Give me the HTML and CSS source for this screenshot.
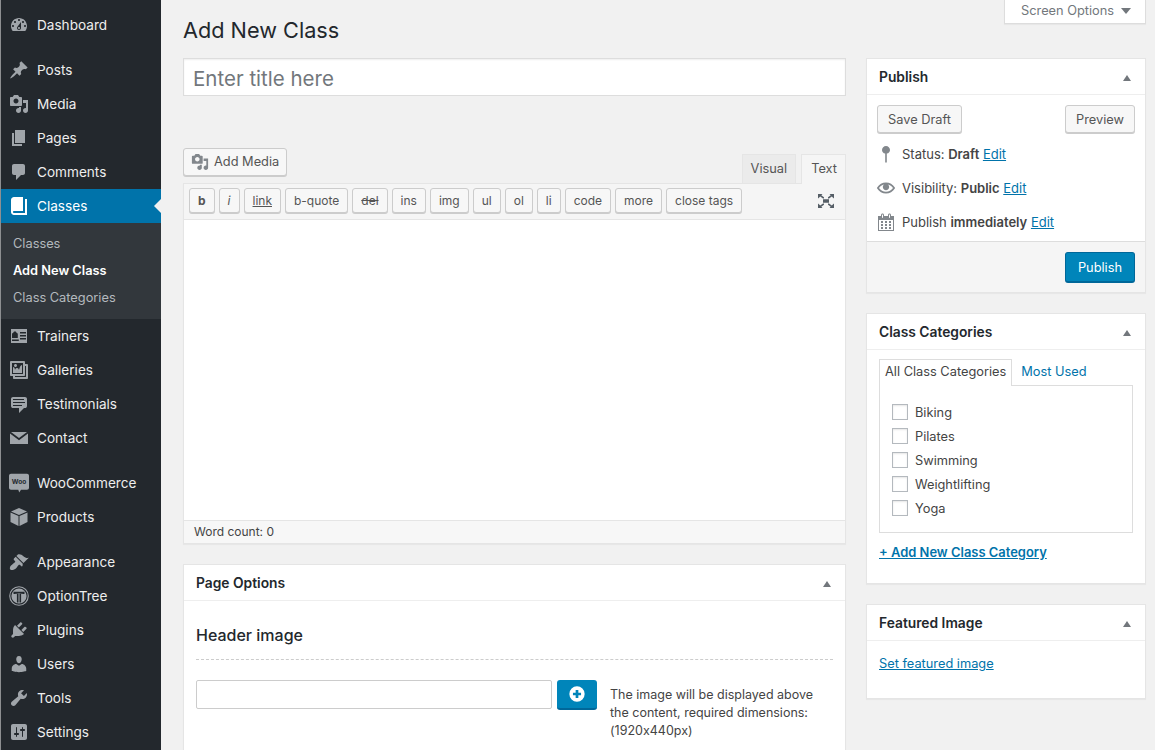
FILE: index.html
```html
<!DOCTYPE html>
<html lang="en">
<head>
<meta charset="utf-8">
<title>Add New Class</title>
<link rel="stylesheet" href="styles.css">
</head>
<body>
<svg class="defs" width="0" height="0" aria-hidden="true">
  <symbol id="i-media" viewBox="0 0 20 20"><path d="M13 11V4c0-.55-.45-1-1-1h-1.67L9 1H5L3.67 3H2c-.55 0-1 .45-1 1v7c0 .55.45 1 1 1h10c.55 0 1-.45 1-1zM7 4.5c1.38 0 2.5 1.12 2.5 2.5S8.38 9.5 7 9.5 4.5 8.38 4.5 7 5.62 4.5 7 4.5zM14 6h5v10.5c0 1.38-1.12 2.5-2.5 2.5S14 17.88 14 16.5s1.12-2.5 2.5-2.5c.17 0 .34.02.5.05V9h-3V6zm-4 8.05V13h2v3.5c0 1.38-1.12 2.5-2.5 2.5S7 17.88 7 16.5 8.12 14 9.5 14c.17 0 .34.02.5.05z"/></symbol>
</svg>
<div class="layout">
<nav class="sidebar">
  <ul class="menu">
    <li class="item"><svg class="ico" viewBox="0 0 20 20"><path d="M3.76 16h12.48c1.1-1.37 1.76-3.11 1.76-5 0-4.42-3.58-8-8-8s-8 3.58-8 8c0 1.89.66 3.63 1.76 5zM10 4c.55 0 1 .45 1 1s-.45 1-1 1-1-.45-1-1 .45-1 1-1zM6 6c.55 0 1 .45 1 1s-.45 1-1 1-1-.45-1-1 .45-1 1-1zm8 0c.55 0 1 .45 1 1s-.45 1-1 1-1-.45-1-1 .45-1 1-1zm-5.37 5.55L12 7v6c0 1.1-.9 2-2 2s-2-.9-2-2c0-.57.24-1.08.63-1.45zM4 10c.55 0 1 .45 1 1s-.45 1-1 1-1-.45-1-1 .45-1 1-1zm12 0c.55 0 1 .45 1 1s-.45 1-1 1-1-.45-1-1 .45-1 1-1zm-5 3c0-.55-.45-1-1-1s-1 .45-1 1 .45 1 1 1 1-.45 1-1z" fill-rule="evenodd"/></svg>Dashboard</li>
    <li class="sep"></li>
    <li class="item"><svg class="ico" viewBox="0 0 20 20"><path d="M10.44 3.02l1.82-1.82 6.36 6.35-1.83 1.82c-1.05-.68-2.48-.57-3.41.36l-.75.75c-.92.93-1.04 2.35-.35 3.41l-1.83 1.82-2.41-2.41-2.8 2.79c-.42.42-3.38 2.71-3.8 2.29s1.86-3.39 2.28-3.81l2.79-2.79L4.1 9.36l1.83-1.82c1.05.69 2.48.57 3.4-.36l.75-.75c.93-.92 1.05-2.35.36-3.41z"/></svg>Posts</li>
    <li class="item"><svg class="ico"><use href="#i-media"/></svg>Media</li>
    <li class="item"><svg class="ico" viewBox="0 0 20 20"><path d="M6 15V2h10v13H6zm-1 1h8v2H3V5h2v11z"/></svg>Pages</li>
    <li class="item"><svg class="ico" viewBox="0 0 20 20"><path d="M5 2h9c1.1 0 2 .9 2 2v7c0 1.1-.9 2-2 2h-2l-5 5v-5H5c-1.1 0-2-.9-2-2V4c0-1.1.9-2 2-2z"/></svg>Comments</li>
    <li class="item current"><svg class="ico" viewBox="0 0 20 20"><path d="M16 3h2v16H5c-1.66 0-3-1.34-3-3V4c0-1.66 1.34-3 3-3h9v14H5c-.55 0-1 .45-1 1s.45 1 1 1h11V3z"/></svg>Classes</li>
    <li class="sub">
      <a class="sub-link">Classes</a>
      <a class="sub-link on">Add New Class</a>
      <a class="sub-link">Class Categories</a>
    </li>
    <li class="item"><svg class="ico" viewBox="0 0 20 20"><path fill-rule="evenodd" d="M2 3h16v14H2zM3 8.2c0-1 .7-1.2 1.2-1.2 0-.9.5-1.6 1.7-1.6s1.7.7 1.7 1.6c.5 0 1.2.2 1.2 1.200V12H3zM11 6h6v1.500h-6zM11 9h6v1.500h-6zM11 12h6v1.500h-6zM3 13.500h6.800V15H3z"/></svg>Trainers</li>
    <li class="item"><svg class="ico" viewBox="0 0 20 20"><path d="M16 4h1.960c.57 0 1.040.47 1.040 1.040v12.920c0 .57-.47 1.040-1.040 1.040H5.040C4.470 19 4 18.530 4 17.960V16H2.040C1.470 16 1 15.530 1 14.960V2.040C1 1.470 1.470 1 2.040 1h12.920c.57 0 1.040.47 1.040 1.040V4zM3 14h11V3H3v11zm5-8.500C8 4.670 7.330 4 6.500 4S5 4.670 5 5.500 5.670 7 6.500 7 8 6.330 8 5.500zm2 4.500s1-5 3-5v8H4V7c2 0 2 3 2 3s.33-2 2-2 2 2 2 2zm7 7V6h-1v8.960c0 .57-.47 1.040-1.040 1.040H6v1h11z"/></svg>Galleries</li>
    <li class="item"><svg class="ico" viewBox="0 0 20 20"><path d="M4 3h12c.55 0 1.020.2 1.410.59S18 4.450 18 5v7c0 .55-.2 1.020-.59 1.410S16.550 14 16 14h-1l-5 5v-5H4c-.55 0-1.020-.2-1.410-.59S2 12.550 2 12V5c0-.55.2-1.020.59-1.410S3.450 3 4 3zm11 2H4v1h11V5zm1 3H4v1h12V8zm-3 3H4v1h9v-1z"/></svg>Testimonials</li>
    <li class="item"><svg class="ico" viewBox="0 0 20 20"><path d="M2 4h16l-8 6zM1 5.500l9 6.800 9-6.800V16H1z"/></svg>Contact</li>
    <li class="sep"></li>
    <li class="item"><svg class="ico woo" viewBox="0 0 20 20"><path d="M2 .8h16c1.100 0 2 .9 2 2v12c0 1.100-.9 2-2 2h-6l-1.800 2.600-.9-2.600H2c-1.100 0-2-.9-2-2v-12c0-1.100.9-2 2-2z"/><text class="woo-text" x="10" y="11.300" text-anchor="middle">Woo</text></svg>WooCommerce</li>
    <li class="item"><svg class="ico" viewBox="0 0 20 20"><path d="M10 1l8 3.500-8 3.500-8-3.500zM9.500 9v10l-8-4V5.500zM10.500 9v10l8-4V5.500z"/></svg>Products</li>
    <li class="sep"></li>
    <li class="item"><svg class="ico" viewBox="0 0 20 20"><path d="M14.480 11.060L7.410 3.990l1.500-1.500c.5-.56 2.300-.47 3.510.32 1.210.8 1.430 1.280 2.910 2.100 1.180.64 2.450 1.260 4.450.85zm-.71.71L6.700 4.700 4.930 6.470c-.39.39-.39 1.020 0 1.410l1.060 1.060c.39.39.39 1.030 0 1.420-.6.6-1.430 1.110-2.210 1.690-.35.26-.7.53-1.010.84C1.430 13.230.18 16.400 1.400 17.600c1.210 1.210 4.370-.03 5.700-1.360.3-.3.58-.64.84-1 .58-.78 1.090-1.610 1.690-2.210.39-.39 1.020-.39 1.410 0l1.070 1.060c.39.39 1.020.39 1.410 0z"/></svg>Appearance</li>
    <li class="item"><svg class="ico" viewBox="0 0 20 20"><path fill-rule="evenodd" d="M10 .2a9.800 9.800 0 1 1 0 19.600a9.800 9.800 0 0 1 0-19.600zM10 1.300a8.700 8.700 0 1 0 0 17.400a8.700 8.700 0 0 0 0-17.400zM10 2.400a7.600 7.600 0 1 1 0 15.200a7.600 7.600 0 0 1 0-15.200zM4.500 5.800v2.200h3.400v8.600h1.600V7.400H6.400V7.300h7.200V7.400h-3.100v9.200h1.600V8h3.400V5.800z"/></svg>OptionTree</li>
    <li class="item"><svg class="ico" viewBox="0 0 20 20"><path d="M13.110 4.360L9.870 7.600 8 5.730l3.240-3.240c.35-.34 1.050-.2 1.560.32.52.51.66 1.210.31 1.550zm-8 1.770l.91-1.120 9.010 9.010-1.190.84c-.71.71-2.630 1.160-3.820 1.160H6.140L4.900 17.260c-.59.59-1.540.59-2.120 0-.59-.58-.59-1.530 0-2.120l1.240-1.240v-3.880c0-1.130.4-3.190 1.090-3.890zm7.260 3.970l3.240-3.240c.34-.35 1.040-.21 1.550.31.52.51.66 1.210.31 1.550l-3.240 3.250z"/></svg>Plugins</li>
    <li class="item"><svg class="ico" viewBox="0 0 20 20"><path d="M10 9.250c-2.270 0-2.730-3.440-2.730-3.440C7 4.020 7.820 2 9.970 2c2.160 0 2.980 2.020 2.710 3.810 0 0-.41 3.440-2.680 3.440zm0 2.570L12.720 10c2.390 0 4.520 2.330 4.520 4.530v2.490s-3.650 1.130-7.240 1.130c-3.650 0-7.240-1.130-7.240-1.130v-2.490c0-2.250 1.940-4.480 4.470-4.480z"/></svg>Users</li>
    <li class="item"><svg class="ico" viewBox="0 0 20 20"><path d="M16.680 9.770c-1.340 1.340-3.300 1.670-4.950.99l-5.410 6.520c-.99.99-2.590.99-3.580 0s-.99-2.590 0-3.570l6.520-5.420c-.68-1.650-.35-3.610.99-4.950 1.280-1.280 3.120-1.620 4.720-1.060l-2.890 2.890 2.820 2.820 2.860-2.870c.53 1.580.18 3.390-1.080 4.650z"/></svg>Tools</li>
    <li class="item"><svg class="ico" viewBox="0 0 20 20"><path d="M18 16V4c0-1.100-.9-2-2-2H4c-1.100 0-2 .9-2 2v12c0 1.100.9 2 2 2h12c1.100 0 2-.9 2-2zM8 11h1c.55 0 1 .45 1 1s-.45 1-1 1H8v1.500c0 .28-.22.5-.5.5s-.5-.22-.5-.5V13H6c-.55 0-1-.45-1-1s.45-1 1-1h1V5.500c0-.28.22-.5.5-.5s.5.22.5.5V11zm5-2h-1c-.55 0-1-.45-1-1s.45-1 1-1h1V5.500c0-.28.22-.5.5-.5s.5.22.5.5V7h1c.55 0 1 .45 1 1s-.45 1-1 1h-1v5.500c0 .28-.22.5-.5.5s-.5-.22-.5-.5V9z"/></svg>Settings</li>
  </ul>
</nav>
<main class="content">
  <div class="screen-options">Screen Options<span class="caret-down"></span></div>
  <h1 class="page-title">Add New Class</h1>
  <div class="columns">
    <div class="col-main">
      <div class="title-input">Enter title here</div>
      <div class="editor-head">
        <button class="btn media-btn"><svg class="btn-ico"><use href="#i-media"/></svg>Add Media</button>
        <div class="tabs">
          <span class="tab">Visual</span>
          <span class="tab active">Text</span>
        </div>
      </div>
      <div class="editor">
        <div class="toolbar">
          <span class="tb"><b>b</b></span>
          <span class="tb"><i>i</i></span>
          <span class="tb"><u>link</u></span>
          <span class="tb">b-quote</span>
          <span class="tb"><s>del</s></span>
          <span class="tb">ins</span>
          <span class="tb">img</span>
          <span class="tb">ul</span>
          <span class="tb">ol</span>
          <span class="tb">li</span>
          <span class="tb">code</span>
          <span class="tb">more</span>
          <span class="tb">close tags</span>
          <svg class="fullscreen" viewBox="0 0 16 14"><path d="M0 0h4.500L3.300 1.200 6 3.200V4.500H5L2.200 2.400 1.200 3.500 0 4.500zM16 0h-4.500l1.200 1.200-2.700 2V4.500h1l2.800-2.100 1 1.100L16 4.500zM0 14h4.500l-1.200-1.200 2.700-2V9.500H5l-2.800 2.100-1-1.100L0 9.500zM16 14h-4.500l1.200-1.200-2.700-2V9.500h1l2.800 2.100 1-1.100L16 9.500zM5 5.200h6v3.600H5z"/></svg>
        </div>
        <div class="textarea"></div>
        <div class="status">Word count: 0</div>
      </div>
      <section class="box page-options">
        <header class="box-head">Page Options<span class="caret-up"></span></header>
        <div class="po-body">
          <h3 class="po-title">Header image</h3>
          <div class="po-row">
            <div class="po-input"></div>
            <button class="po-add"><svg viewBox="0 0 20 20" class="po-plus"><path fill-rule="evenodd" d="M10 1.500a8.500 8.500 0 1 1 0 17a8.500 8.500 0 0 1 0-17zM8.500 5.500v3h-3v3h3v3h3v-3h3v-3h-3v-3z"/></svg></button>
            <p class="po-desc">The image will be displayed above the content, required dimensions: (1920x440px)</p>
          </div>
        </div>
      </section>
    </div>
    <aside class="col-side">
      <section class="box">
        <header class="box-head">Publish<span class="caret-up"></span></header>
        <div class="pub-actions">
          <button class="btn">Save Draft</button>
          <button class="btn">Preview</button>
        </div>
        <div class="pub-line"><svg class="pub-ico" viewBox="0 0 20 20"><path d="M10 2c2.200 0 4 1.800 4 3.900 0 1.700-1.200 3.200-3.200 3.700V18l-.8 1-.8-1V9.600C7.200 9.100 6 7.600 6 5.900 6 3.800 7.800 2 10 2z"/></svg><span>Status: <b>Draft</b> <a>Edit</a></span></div>
        <div class="pub-line"><svg class="pub-ico" viewBox="-1 -1 22 22"><path d="M19.700 9.400C17.700 6 14 3.900 10 3.900S2.300 6 .3 9.400L0 10l.3.6c2 3.400 5.700 5.500 9.700 5.500s7.700-2.100 9.700-5.500l.3-.6-.3-.6zM10 14.100c-3.100 0-6-1.600-7.700-4.100C3.600 8 5.700 6.600 8 6.100c-.9.6-1.500 1.700-1.500 2.900 0 1.900 1.600 3.500 3.500 3.500s3.500-1.600 3.500-3.500c0-1.200-.6-2.300-1.500-2.900 2.300.5 4.400 1.900 5.700 3.900-1.700 2.500-4.600 4.100-7.700 4.100z"/></svg><span>Visibility: <b>Public</b> <a>Edit</a></span></div>
        <div class="pub-line"><svg class="pub-ico" viewBox="0 0 20 20"><path d="M15 4h3v15H2V4h3V3c0-.41.15-.76.44-1.060.29-.29.65-.44 1.060-.44s.77.15 1.060.44c.29.3.44.65.44 1.060v1h4V3c0-.41.15-.76.44-1.060.29-.29.65-.44 1.060-.44s.77.15 1.060.44c.29.3.44.65.44 1.060v1zM6 3v2.500c0 .14.05.26.15.36.09.09.21.14.35.14s.26-.05.35-.14c.1-.1.15-.22.15-.36V3c0-.14-.05-.26-.15-.35-.09-.1-.21-.15-.35-.15s-.26.05-.35.15c-.1.09-.15.21-.15.35zm7 0v2.500c0 .14.05.26.14.36.1.09.22.14.36.14s.26-.05.36-.14c.09-.1.14-.22.14-.36V3c0-.14-.05-.26-.14-.35-.1-.1-.22-.15-.36-.15s-.26.05-.36.15c-.09.09-.14.21-.14.35zm4 15V8H3v10h14zM7 9v2H5V9h2zm2 0h2v2H9V9zm4 2V9h2v2h-2zm-6 1v2H5v-2h2zm2 0h2v2H9v-2zm4 2v-2h2v2h-2zm-6 1v2H5v-2h2zm4 2H9v-2h2v2zm4 0h-2v-2h2v2z"/></svg><span>Publish <b>immediately</b> <a>Edit</a></span></div>
        <div class="pub-foot"><button class="btn-primary">Publish</button></div>
      </section>
      <section class="box">
        <header class="box-head">Class Categories<span class="caret-up"></span></header>
        <div class="cat-body">
          <div class="cat-tabs">
            <span class="cat-tab active">All Class Categories</span>
            <a class="cat-tab">Most Used</a>
          </div>
          <div class="cat-panel">
            <label class="cat"><span class="check"></span>Biking</label>
            <label class="cat"><span class="check"></span>Pilates</label>
            <label class="cat"><span class="check"></span>Swimming</label>
            <label class="cat"><span class="check"></span>Weightlifting</label>
            <label class="cat"><span class="check"></span>Yoga</label>
          </div>
          <a class="add-cat">+ Add New Class Category</a>
        </div>
      </section>
      <section class="box">
        <header class="box-head">Featured Image<span class="caret-up"></span></header>
        <div class="feat-body"><a>Set featured image</a></div>
      </section>
    </aside>
  </div>
</main>
</div>
</body>
</html>
```

FILE: styles.css
```css
* { box-sizing: border-box; }
html, body { margin: 0; height: 100%; overflow: hidden; }
body { background: #f1f1f1; color: #444; font: 12.8px/1.4 Inter, "Liberation Sans", sans-serif; }
.defs { position: absolute; }
svg { fill: currentColor; display: block; flex: none; }
.layout { display: flex; height: 750px; }
a { color: #0073aa; text-decoration: underline; }

.sidebar { width: 161px; flex: none; background: #23282d; border-left: 1px solid #8d8f91; padding-top: 8px; }
.menu { list-style: none; margin: 0; padding: 0; }
.item { height: 34px; display: flex; align-items: center; color: #eee; font-size: 13.6px; position: relative; padding-top: 2px; }
.ico { width: 20px; height: 20px; margin: -2px 8px 0; color: #a0a5aa; }
.sep { height: 11px; }
.current { background: #0073aa; color: #fff; }
.current .ico { color: #fff; }
.current::after { content: ""; position: absolute; right: 0; top: 10px; border: 7px solid transparent; border-left-width: 0; border-right-color: #f1f1f1; }
.sub { background: #32373c; height: 96px; padding: 7px 0 0 12px; display: flex; flex-direction: column; }
.sub-link { height: 27px; line-height: 27px; color: #b4b9be; font-size: 12.8px; text-decoration: none; }
.sub-link.on { color: #fff; font-weight: 600; }
.woo { color: #a0a5aa; }
.woo-text { font-size: 6.5px; font-weight: 700; fill: #23282d; font-family: Inter, sans-serif; }

.content { flex: 1; padding: 0 9px 0 22px; min-width: 0; }
.screen-options { float: right; width: 142px; height: 24px; background: #fff; border: 1px solid #ddd; border-top: 0; box-shadow: 0 1px 1px rgba(0,0,0,.04); color: #72777c; padding: 0 0 1px 16px; display: flex; align-items: center; }
.caret-down { margin-left: 7px; border: 5px solid transparent; border-top: 6px solid #72777c; border-bottom: 0; }
.page-title { margin: 0; padding-top: 16px; height: 58px; font-size: 21.7px; font-weight: 400; color: #23282d; line-height: 28px; }
.columns { display: grid; grid-template-columns: 663px 280px; gap: 20px; clear: both; }
.col-main, .col-side { min-width: 0; }
.title-input { height: 38px; background: #fff; border: 1px solid #ddd; box-shadow: inset 0 1px 2px rgba(0,0,0,.07); font-size: 20.5px; line-height: 38px; padding: 1px 0 0 9px; color: #72777c; }

.editor-head { display: flex; justify-content: space-between; align-items: flex-end; margin-top: 52px; height: 35px; }
.btn { height: 28px; padding: 0 10px; font: inherit; color: #555; background: #f7f7f7; border: 1px solid #ccc; border-radius: 3px; box-shadow: 0 1px 0 #ccc; display: inline-flex; align-items: center; white-space: nowrap; }
.pub-actions .btn { padding-top: 2px; }
.media-btn { margin-bottom: 7px; padding: 0 7px; width: 104px; }
.btn-ico { width: 18px; height: 18px; margin-right: 5px; color: #82878c; }
.tabs { display: flex; height: 29px; }
.tab { padding: 0 8px; background: #ebebeb; border: 1px solid #e5e5e5; border-bottom: 0; color: #555; line-height: 27px; margin-left: 5px; }
.tab.active { background: #f5f5f5; margin-bottom: -1px; height: 30px; padding: 0 8px 0 9px; }

.editor { border: 1px solid #e5e5e5; background: #fff; box-shadow: 0 1px 1px rgba(0,0,0,.04); margin-bottom: 20px; }
.toolbar { background: #f5f5f5; border-bottom: 1px solid #e5e5e5; height: 36px; padding: 4px 5px 0; display: flex; gap: 4px; align-items: flex-start; position: relative; }
.tb { height: 25px; padding: 0 8px; background: #f7f7f7; border: 1px solid #ccc; border-radius: 3px; box-shadow: 0 1px 0 #ccc; font-size: 12px; line-height: 23px; color: #555; text-align: center; }
.fullscreen { width: 16px; height: 14px; color: #555e66; margin: 6px 6px 0 auto; }
.textarea { height: 300px; background: #fff; }
.status { height: 23px; background: #f7f7f7; border-top: 1px solid #e5e5e5; padding-left: 10px; font-size: 12px; line-height: 22px; color: #444; }

.box { background: #fff; border: 1px solid #e5e5e5; box-shadow: 0 1px 1px rgba(0,0,0,.04); margin-bottom: 20px; }
.box-head { height: 36px; padding: 2px 12px 0; border-bottom: 1px solid #eee; font-size: 13.8px; font-weight: 600; color: #23282d; display: flex; justify-content: space-between; align-items: center; }
.caret-up { margin-right: 2px; border: 4px solid transparent; border-bottom: 6px solid #72777c; border-top: 0; }
.pub-actions { display: flex; justify-content: space-between; padding: 10px 10px 0; }
.pub-line { display: flex; align-items: center; height: 34px; padding-left: 9px; font-size: 13px; }
.pub-actions + .pub-line { margin-top: 4px; }
.pub-ico { width: 20px; height: 20px; color: #82878c; margin-right: 6px; }
.pub-line b { font-weight: 600; }
.pub-foot { margin-top: 2px; background: #f5f5f5; border-top: 1px solid #ddd; height: 51px; padding: 10px 10px 0; display: flex; justify-content: flex-end; }
.btn-primary { width: 70px; height: 31px; padding: 2px 0 0; background: #0085ba; border: 1px solid #006799; border-bottom-width: 2px; border-radius: 3px; color: #fff; font: inherit; }

.cat-body { padding: 9px 12px 0; height: 233px; }
.cat-tabs { display: flex; height: 26px; }
.cat-tab { padding: 0 5px; border: 1px solid transparent; line-height: 24px; text-decoration: none; margin-left: 3px; }
.cat-tab.active { margin-left: 0; background: #fff; border-color: #ddd; border-bottom: 0; height: 27px; position: relative; z-index: 1; }
.cat-panel { border: 1px solid #ddd; height: 148px; padding: 14px 12px 0; }
.cat { display: flex; align-items: center; height: 24px; padding-top: 2px; }
.check { width: 16px; height: 16px; border: 1px solid #b4b9be; margin: -2px 7px 0 0; background: #fff; box-shadow: inset 0 1px 2px rgba(0,0,0,.1); }
.add-cat { display: block; margin-top: 10px; font-weight: 600; font-size: 12.95px; }
.feat-body { padding: 14px 12px 0; height: 57px; }

.page-options { margin-bottom: 0; height: 300px; }
.po-body { padding: 0 12px; }
.po-title { margin: 0; height: 59px; padding-top: 23px; font-size: 16px; font-weight: 500; color: #23282d; line-height: 22px; border-bottom: 1px dashed #ccc; }
.po-row { display: flex; align-items: flex-start; margin-top: 20px; }
.po-input { width: 356px; height: 29px; background: #fff; border: 1px solid #ccc; border-radius: 2px; }
.po-add { width: 40px; height: 30px; background: #0085ba; border: 0; border-bottom: 2px solid #006799; border-radius: 3px; margin-left: 5px; padding: 0; display: flex; align-items: center; justify-content: center; }
.po-plus { width: 18px; height: 18px; color: #fff; }
.po-desc { margin: 6px 0 0 13px; width: 222px; font-size: 12.5px; line-height: 18px; color: #444; font-feature-settings: "calt" 0; }
```
